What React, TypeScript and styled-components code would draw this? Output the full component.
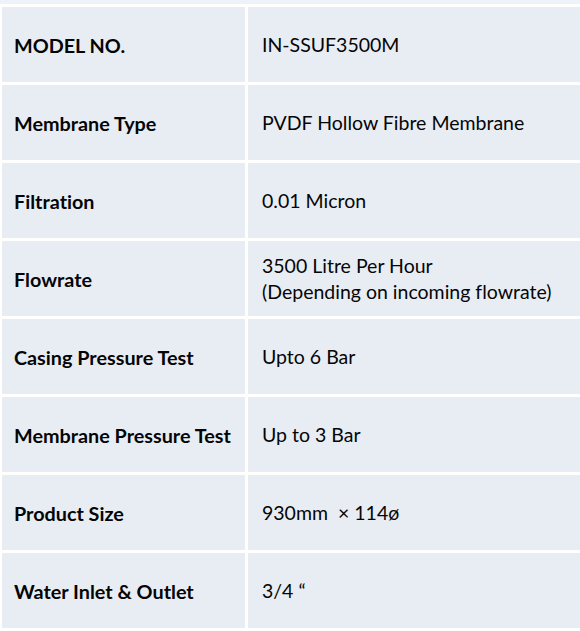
import React from "react";
import styled, { createGlobalStyle } from "styled-components";

const Global = createGlobalStyle`
  html, body { margin: 0; padding: 0; background: #ffffff; }
  body { font-family: Lato, "Open Sans", sans-serif; }
`;

const Page = styled.div`
  width: 580px;
  height: 631px;
  overflow: hidden;
  background: #ffffff;
`;

const TopStrip = styled.div`
  height: 4px;
  background: #eef3f9;
  margin-bottom: 3px;
`;

const Table = styled.div`
  display: grid;
  grid-template-columns: 243px 1fr;
  grid-auto-rows: 75px;
  gap: 3px;
  padding-left: 2px;
`;

const Cell = styled.div<{ $head?: boolean }>`
  background: #e8edf4;
  display: flex;
  flex-direction: column;
  justify-content: center;
  padding-left: ${(p) => (p.$head ? "12px" : "14px")};
  color: #050505;
  font-size: ${(p) => (p.$head ? "19.8px" : "19.5px")};
  font-weight: ${(p) => (p.$head ? 700 : 400)};
  font-variant-ligatures: none;
  line-height: 26px;
  white-space: nowrap;
`;

const Line = styled.span`
  white-space: pre;
`;

const rows: [string, string[]][] = [
  ["MODEL NO.", ["IN-SSUF3500M"]],
  ["Membrane Type", ["PVDF Hollow Fibre Membrane"]],
  ["Filtration", ["0.01 Micron"]],
  ["Flowrate", ["3500 Litre Per Hour", "(Depending on incoming flowrate)"]],
  ["Casing Pressure Test", ["Upto 6 Bar"]],
  ["Membrane Pressure Test", ["Up to 3 Bar"]],
  ["Product Size", ["930mm  × 114ø"]],
  ["Water Inlet & Outlet", ["3/4 “"]],
];

export default function App() {
  return (
    <Page>
      <Global />
      <TopStrip />
      <Table>
        {rows.map(([k, v]) => (
          <React.Fragment key={k}>
            <Cell $head>{k}</Cell>
            <Cell>
              {v.map((line) => (
                <Line key={line}>{line}</Line>
              ))}
            </Cell>
          </React.Fragment>
        ))}
      </Table>
    </Page>
  );
}
